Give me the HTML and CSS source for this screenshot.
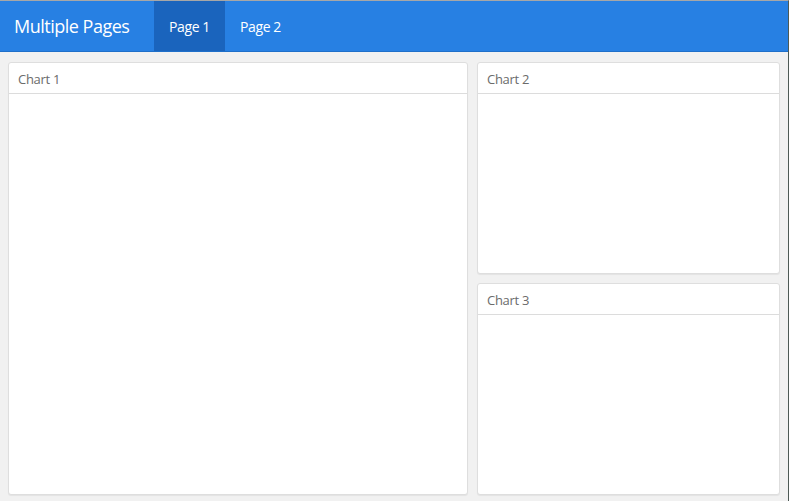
FILE: index.html
```html
<!DOCTYPE html>
<html>
<head>
<meta charset="utf-8">
<link rel="stylesheet" href="styles.css">
</head>
<body>
<div class="app">
  <nav class="navbar">
    <div class="brand">Multiple Pages</div>
    <ul class="tabs">
      <li class="tab active">Page 1</li>
      <li class="tab">Page 2</li>
    </ul>
  </nav>
  <main class="page">
    <section class="card big">
      <div class="card-title">Chart 1</div>
      <div class="card-body"></div>
    </section>
    <div class="col">
      <section class="card">
        <div class="card-title">Chart 2</div>
        <div class="card-body"></div>
      </section>
      <section class="card">
        <div class="card-title">Chart 3</div>
        <div class="card-body"></div>
      </section>
    </div>
  </main>
</div>
</body>
</html>
```
FILE: styles.css
```css
html, body {
  margin: 0;
  padding: 0;
  height: 100%;
}
body {
  background: #f1f1f1;
  font-family: "Open Sans", "Noto Sans", "Liberation Sans", sans-serif;
}
.app {
  height: 501px;
  box-sizing: border-box;
  border-top: 1px solid #a7a7a7;
  border-right: 1px solid #4d5a55;
  display: flex;
  flex-direction: column;
}
.navbar {
  height: 50px;
  flex: 0 0 50px;
  background: #2780e3;
  border-bottom: 1px solid #1f6fc9;
  display: flex;
  align-items: stretch;
  color: #fff;
}
.brand {
  width: 140px;
  padding-left: 14px;
  font-size: 18px;
  line-height: 50px;
  letter-spacing: -0.5px;
  white-space: nowrap;
}
.tabs {
  list-style: none;
  margin: 0;
  padding: 0;
  display: flex;
}
.tab {
  width: 71px;
  text-align: center;
  font-size: 14px;
  line-height: 51px;
  letter-spacing: -0.4px;
}
.tab.active {
  background: #1a64bd;
}
.page {
  flex: 1;
  display: flex;
  gap: 9px;
  padding: 10px 8px 6px 8px;
  min-height: 0;
}
.col {
  flex: 0 0 303px;
  display: flex;
  flex-direction: column;
  gap: 9px;
}
.card {
  flex: 1;
  background: #fff;
  border: 1px solid #dedede;
  border-radius: 3px;
  box-shadow: 0 1px 1px rgba(0,0,0,0.06);
  display: flex;
  flex-direction: column;
  box-sizing: border-box;
}
.card.big {
  flex: 0 0 460px;
}
.card-title {
  height: 31px;
  box-sizing: border-box;
  padding: 0 9px;
  font-size: 13px;
  line-height: 33px;
  color: #6b6b6b;
  border-bottom: 1px solid #dcdcdc;
  letter-spacing: -0.3px;
}
.card-body {
  flex: 1;
}
```
